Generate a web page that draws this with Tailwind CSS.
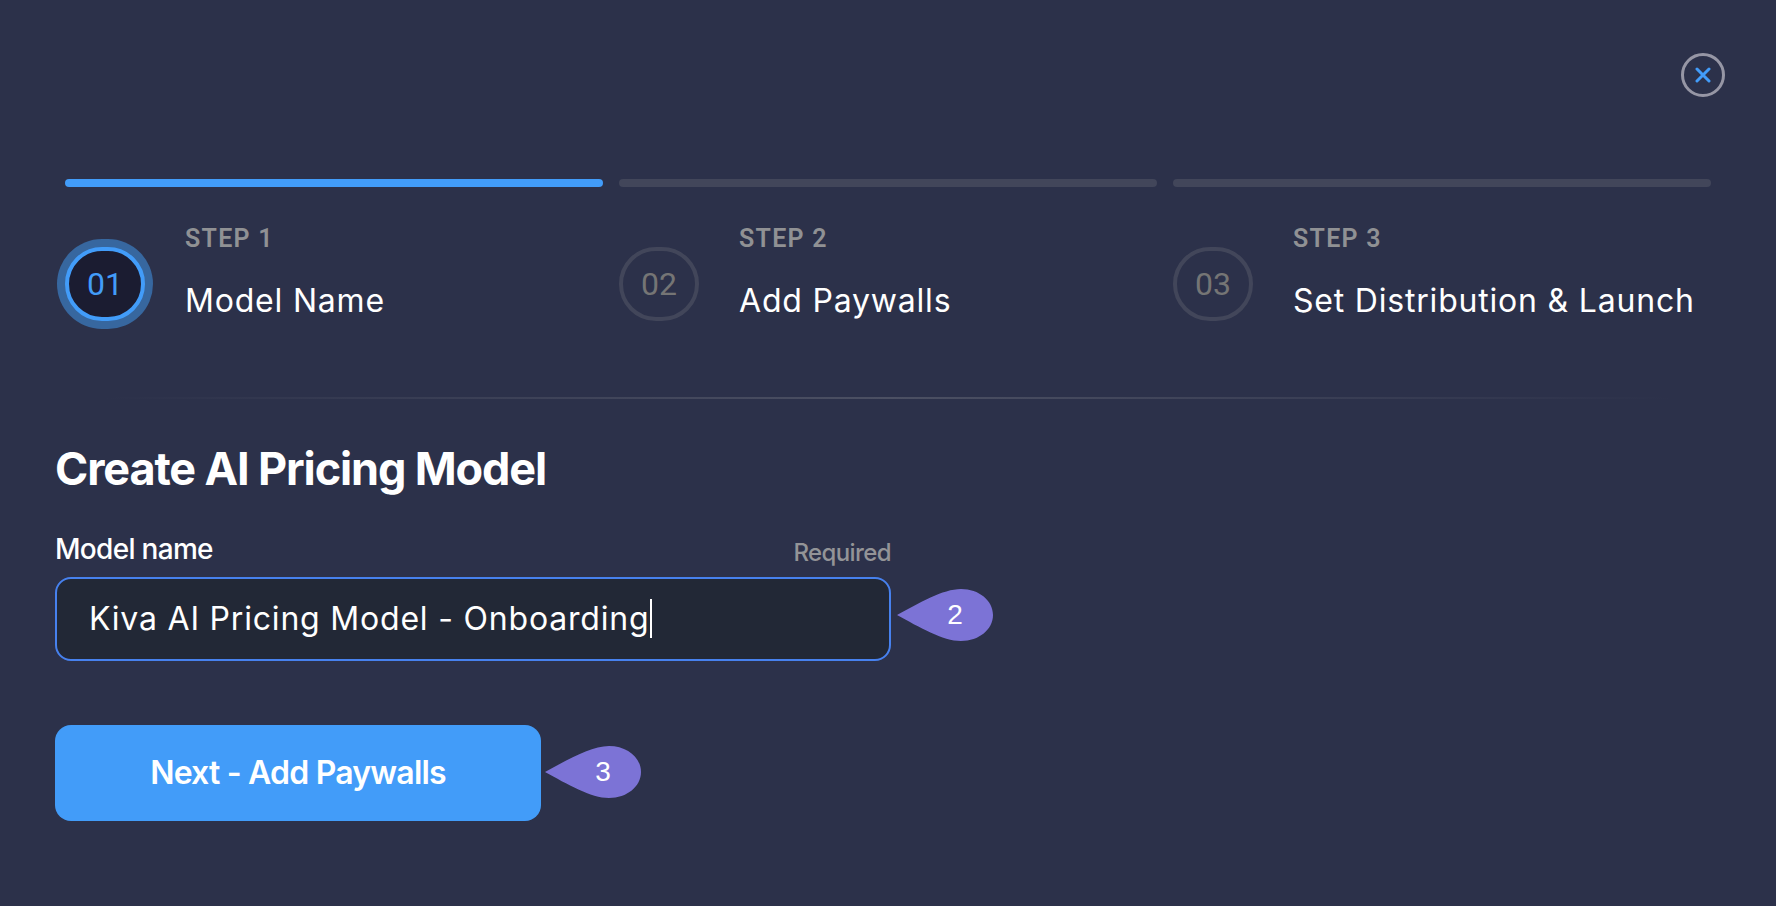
<!DOCTYPE html>
<html lang="en">
<head>
  <meta charset="UTF-8" />
  <meta name="viewport" content="width=device-width, initial-scale=1.0" />
  <title>Create AI Pricing Model</title>
  <script src="https://cdn.jsdelivr.net/npm/@tailwindcss/browser@4"></script>
</head>
<body class="bg-[#2c314a] min-h-screen text-white font-['Inter',sans-serif]">
  <header class="flex justify-end pt-[53px] pr-[51px]">
    <button type="button" aria-label="Close" class="flex items-center justify-center size-11 rounded-full border-3 border-[#9696a5]">
      <svg class="size-4" viewBox="0 0 16 16" fill="none" stroke="#429cf9" stroke-width="3" stroke-linecap="round">
        <path d="M2 2l12 12M14 2L2 14" />
      </svg>
    </button>
  </header>

  <main class="px-[55px] pb-20">
    <!-- Steps -->
    <ol class="grid grid-cols-3 gap-4 px-[10px] mt-[82px]">
      <li>
        <div class="h-2 rounded-full bg-[#429cf9]"></div>
        <div class="flex items-start gap-10 mt-9">
          <div class="flex shrink-0 items-center justify-center w-20 h-[74px] mt-6 rounded-full border-4 border-[#429cf9] bg-[#1b1c31] ring-8 ring-[#37679f] text-[#429cf9] text-[32px] font-['Roboto',sans-serif]">01</div>
          <div>
            <p class="text-[25px] leading-8 font-semibold tracking-wider text-[#909194] font-['Roboto',sans-serif]">STEP 1</p>
            <p class="mt-[26px] text-[32px] leading-10 tracking-wide">Model Name</p>
          </div>
        </div>
      </li>
      <li>
        <div class="h-2 rounded-full bg-[#42465a]"></div>
        <div class="flex items-start gap-10 mt-9">
          <div class="flex shrink-0 items-center justify-center w-20 h-[74px] mt-6 rounded-full border-4 border-[#42465a] text-[#757575] text-[32px] font-['Roboto',sans-serif]">02</div>
          <div>
            <p class="text-[25px] leading-8 font-semibold tracking-wider text-[#909194] font-['Roboto',sans-serif]">STEP 2</p>
            <p class="mt-[26px] text-[32px] leading-10 tracking-wide">Add Paywalls</p>
          </div>
        </div>
      </li>
      <li>
        <div class="h-2 rounded-full bg-[#42465a]"></div>
        <div class="flex items-start gap-10 mt-9">
          <div class="flex shrink-0 items-center justify-center w-20 h-[74px] mt-6 rounded-full border-4 border-[#42465a] text-[#757575] text-[32px] font-['Roboto',sans-serif]">03</div>
          <div>
            <p class="text-[25px] leading-8 font-semibold tracking-wider text-[#909194] font-['Roboto',sans-serif]">STEP 3</p>
            <p class="mt-[26px] text-[32px] leading-10 tracking-wide">Set Distribution &amp; Launch</p>
          </div>
        </div>
      </li>
    </ol>

    <div class="h-0.5 mt-[76px] bg-linear-to-r from-transparent from-3% via-[#4c5063] to-transparent to-97%"></div>

    <!-- Form -->
    <form id="modelForm" class="mt-[42px]">
      <h1 class="text-[45px] leading-14 font-bold tracking-tight">Create AI Pricing Model</h1>

      <div class="max-w-[836px] mt-8">
        <div class="flex items-end justify-between">
          <label for="modelName" class="text-[28px] leading-10 font-medium tracking-tight">Model name</label>
          <span class="text-2xl leading-8 font-medium tracking-tight text-[#939497]">Required</span>
        </div>
        <div class="relative mt-2">
          <input id="modelName" type="text" name="modelName" value="Kiva AI Pricing Model - Onboarding" required class="block w-full h-21 px-8 pb-0.5 rounded-2xl border-2 border-[#4781ee] bg-[#222836] text-[32px] tracking-wide caret-transparent outline-none" />
          <span class="absolute left-[595px] top-[22px] w-0.5 h-[39px] bg-white"></span>
          <div class="absolute left-full top-3 ml-1.5 w-24 h-[52px]">
            <svg class="size-full" viewBox="0 0 96 52" fill="#7c73d6">
              <path d="M0 26C22 14 46 0 64 0C82 0 96 11.500 96 26S82 52 64 52C46 52 22 38 0 26Z" />
            </svg>
            <span class="absolute inset-y-0 right-0 flex items-center justify-center w-19 text-[28px] font-['Liberation_Sans',sans-serif]">2</span>
          </div>
        </div>
      </div>

      <div class="relative w-fit mt-16">
        <button type="submit" class="w-[486px] h-24 rounded-2xl bg-[#429cf9] text-[32px] font-semibold tracking-tight">Next - Add Paywalls</button>
        <div class="absolute left-full top-[21px] ml-1 w-24 h-[52px]">
          <svg class="size-full" viewBox="0 0 96 52" fill="#7c73d6">
            <path d="M0 26C22 14 46 0 64 0C82 0 96 11.500 96 26S82 52 64 52C46 52 22 38 0 26Z" />
          </svg>
          <span class="absolute inset-y-0 right-0 flex items-center justify-center w-19 text-[28px] font-['Liberation_Sans',sans-serif]">3</span>
        </div>
      </div>
    </form>
  </main>

  <script>
    document.getElementById("modelForm").addEventListener("submit", (e) => {
      e.preventDefault();
    });
  </script>
</body>
</html>
